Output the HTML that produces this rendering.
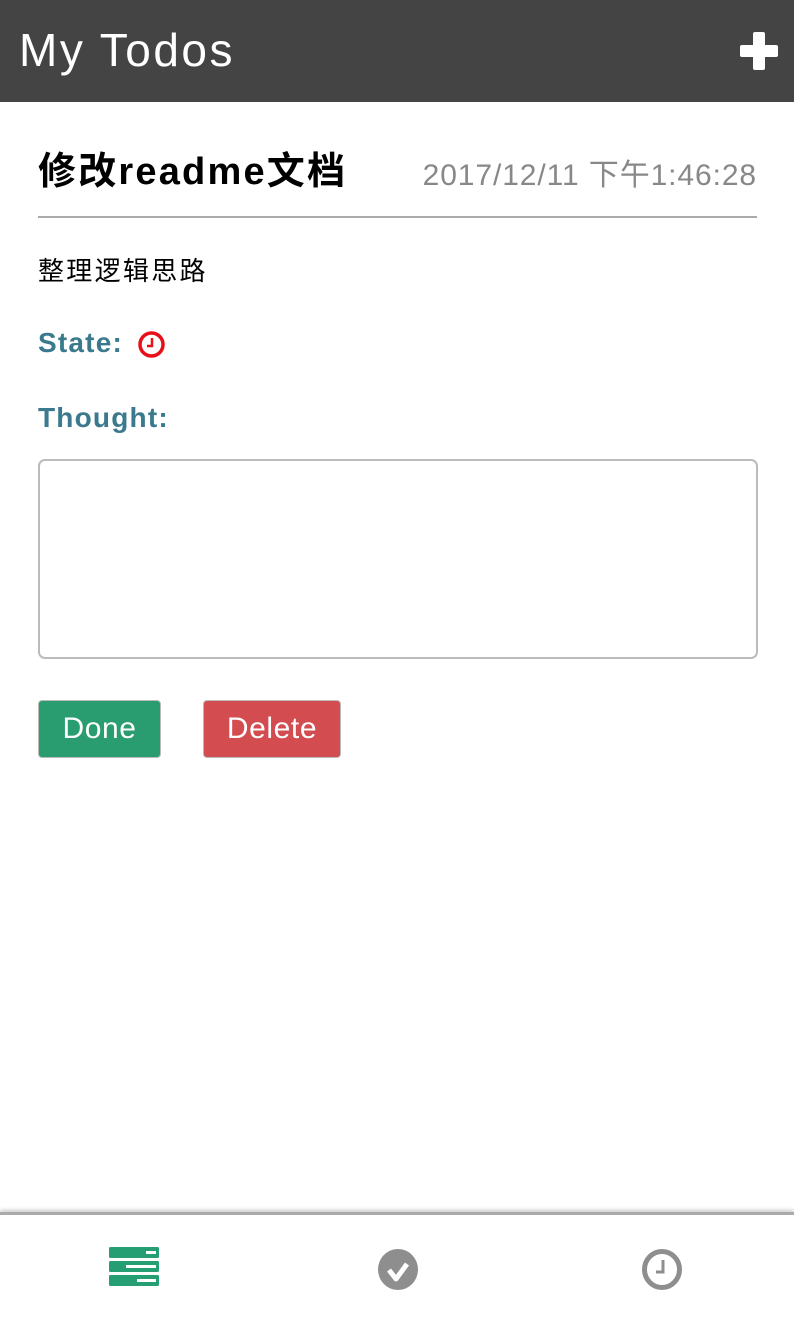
<!DOCTYPE html>
<html><head><meta charset="utf-8"><style>
body{margin:0;width:794px;height:1319px;position:relative;font-family:"Liberation Sans","Noto Sans CJK SC",sans-serif;background:#fff;overflow:hidden}
.hd{position:absolute;left:0;top:0;width:794px;height:102px;background:#444}
.hd .t{position:absolute;left:19px;top:22px;color:#fff;font-size:46px;line-height:56px;letter-spacing:2.5px}
.hd .p{position:absolute;left:740px;top:32px;width:38px;height:38px}
.hd .p:before{content:"";position:absolute;left:13px;top:0;width:12px;height:38px;background:#fff;border-radius:2px}
.hd .p:after{content:"";position:absolute;left:0;top:13px;width:38px;height:12px;background:#fff;border-radius:2px}
.a{position:absolute;white-space:nowrap}
.h1{left:38px;top:148px;font-size:38px;font-weight:bold;line-height:48px;letter-spacing:2.2px}
.dt{right:37px;top:156px;font-size:30px;color:#888;line-height:40px;letter-spacing:0.9px}
.hr{position:absolute;left:38px;top:216px;width:719px;height:2px;background:#aaa}
.lb{color:#3a7a8c;font-weight:bold;font-size:28px;line-height:36px;letter-spacing:1.2px}
.ta{position:absolute;left:38px;top:459px;width:716px;height:196px;border:2px solid #bbb;border-radius:7px}
.btn{position:absolute;top:700px;height:56px;border:1px solid #bbb;border-radius:4px;color:#fff;font-size:30px;line-height:56px;text-align:center;letter-spacing:0.6px}
.ft{position:absolute;left:0;top:1212px;width:794px;height:107px;border-top:3px solid #aaa;box-shadow:0 -2px 4px #ccc;background:#fff}
</style></head><body>
<div class="hd"><div class="t">My Todos</div><div class="p"></div></div>
<div class="a h1">修改readme文档</div>
<div class="a dt">2017/12/11 下午1:46:28</div>
<div class="hr"></div>
<div class="a" style="left:38px;top:254px;font-size:26px;line-height:34px;letter-spacing:2.3px">整理逻辑思路</div>
<div class="a lb" style="left:38px;top:325px">State:</div>
<svg class="a" style="left:137px;top:330px" width="29" height="29" viewBox="0 0 29 29"><circle cx="14.5" cy="14.5" r="11.5" fill="none" stroke="#e8101a" stroke-width="3.5"/><path d="M15 8v8h-5" fill="none" stroke="#e8101a" stroke-width="2.5"/></svg>
<div class="a lb" style="left:38px;top:400px">Thought:</div>
<div class="ta"></div>
<div class="btn" style="left:38px;width:121px;background:#2a9d70">Done</div>
<div class="btn" style="left:203px;width:136px;background:#d24c50">Delete</div>
<div class="ft">
<svg class="a" style="left:109px;top:32px" width="50" height="42" viewBox="0 0 50 42"><rect x="0" y="0" width="50" height="11" rx="1.5" fill="#269e74"/><rect x="0" y="14" width="50" height="11" rx="1.5" fill="#269e74"/><rect x="0" y="28" width="50" height="11" rx="1.5" fill="#269e74"/><rect x="37" y="4" width="10" height="3" fill="#fff"/><rect x="17" y="18" width="30" height="3" fill="#fff"/><rect x="28" y="32" width="19" height="3" fill="#fff"/></svg>
<svg class="a" style="left:376px;top:34px" width="44" height="44" viewBox="0 0 44 44"><ellipse cx="22" cy="20.5" rx="20" ry="20.5" fill="#8e8e8e"/><path d="M13 21l7 9 11-15" fill="none" stroke="#fff" stroke-width="5" stroke-linejoin="round"/></svg>
<svg class="a" style="left:640px;top:34px" width="44" height="44" viewBox="0 0 44 44"><ellipse cx="22" cy="20.5" rx="17.5" ry="18" fill="none" stroke="#8e8e8e" stroke-width="5"/><path d="M23 11v12h-7" fill="none" stroke="#8e8e8e" stroke-width="3"/></svg>
</div>
</body></html>
